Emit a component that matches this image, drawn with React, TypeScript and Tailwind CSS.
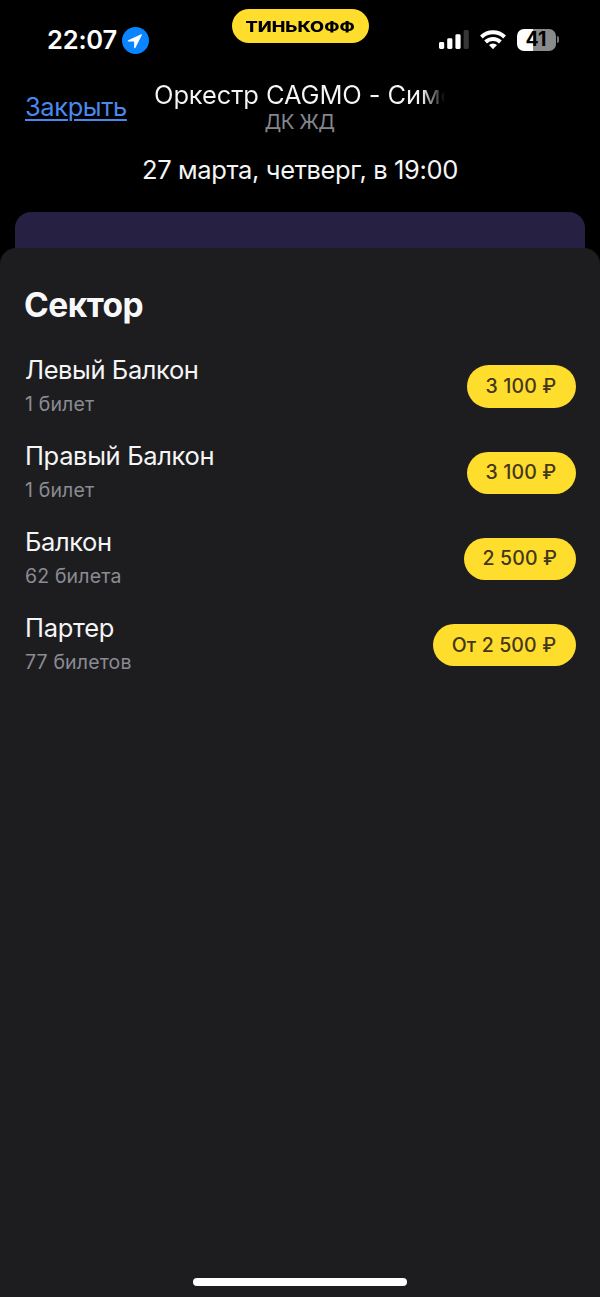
import React from "react";
import clsx from "clsx";

interface Sector {
  id: string;
  title: string;
  tickets: string;
  price: string;
  titleTracking: string;
  pillWidth: string;
}

const sectors: Sector[] = [
  { id: "left", title: "Левый Балкон", tickets: "1 билет", price: "3 100 ₽", titleTracking: "tracking-[-0.42px]", pillWidth: "w-[109px]" },
  { id: "right", title: "Правый Балкон", tickets: "1 билет", price: "3 100 ₽", titleTracking: "tracking-[-0.34px]", pillWidth: "w-[109px]" },
  { id: "balcony", title: "Балкон", tickets: "62 билета", price: "2 500 ₽", titleTracking: "tracking-[-0.42px]", pillWidth: "w-[111.5px]" },
  { id: "parterre", title: "Партер", tickets: "77 билетов", price: "От 2 500 ₽", titleTracking: "tracking-[-0.3px]", pillWidth: "w-[143px]" },
];

function SignalIcon() {
  return (
    <svg width="30" height="19" viewBox="0 0 30 19" fill="#fff">
      <rect x="0" y="12" width="5.2" height="7" rx="1.4" />
      <rect x="8.2" y="8.3" width="5.2" height="10.7" rx="1.4" />
      <rect x="16.4" y="4.3" width="5.2" height="14.7" rx="1.4" />
      <rect x="24.6" y="0" width="5.2" height="19" rx="1.4" fill="#363636" />
    </svg>
  );
}

function WifiIcon() {
  return (
    <svg width="26" height="19" viewBox="0 0 26 19" fill="none" stroke="#fff" strokeWidth="3.9">
      <path d="M1.4 7a16.6 16.6 0 0 1 23.2 0" />
      <path d="M5.6 12a10.6 10.6 0 0 1 14.8 0" />
      <path d="M13 19.2l-4-4.1a5.7 5.7 0 0 1 8 0z" fill="#fff" stroke="none" />
    </svg>
  );
}

function Battery() {
  return (
    <div className="flex items-center gap-[1.5px]">
      <div className="flex h-[21.5px] w-[39px] items-center justify-center rounded-[7px] bg-linear-to-r from-white from-[42%] to-[#8a8a8a] to-[42%] text-[19.5px] font-bold leading-none text-black">
        41
      </div>
      <div className="h-[7px] w-[2px] rounded-r-full bg-[#777]" />
    </div>
  );
}

function StatusBar() {
  return (
    <div className="flex h-20 items-start justify-between pl-[47px] pr-[41px]">
      <div className="flex w-[184px] items-center gap-[5px] pt-[26px]">
        <span className="text-[25.5px] font-semibold leading-7 tracking-[-0.2px] text-white">22:07</span>
        <svg width="27" height="27" viewBox="0 0 27 27">
          <circle cx="13.5" cy="13.5" r="13.5" fill="#0a84ff" />
          <path d="M19.2 7.2L6.2 13.2c-.8.4-.6 1.4.2 1.4h5.7v5.8c0 .9 1.1 1.1 1.5.2L19.9 7.9c.2-.5-.2-.9-.7-.7z" fill="#fff" />
        </svg>
      </div>
      <div className="mt-[9px] flex h-[34px] w-[137px] items-center justify-center rounded-full bg-[#ffdd2d]">
        <span className="mt-px scale-x-[1.3] text-[14px] font-extrabold leading-none text-black">ТИНЬКОФФ</span>
      </div>
      <div className="flex w-[190px] items-center justify-end pt-[29px]">
        <SignalIcon />
        <span className="w-[11px]" />
        <WifiIcon />
        <span className="w-[11px]" />
        <Battery />
      </div>
    </div>
  );
}

function SectorRow({ sector }: { sector: Sector }) {
  return (
    <li className="flex h-[86.2px] items-center justify-between">
      <div>
        <div className={clsx("text-[25.5px] leading-[34px] text-[#f5f5f6]", sector.titleTracking)}>{sector.title}</div>
        <div className="text-[19.5px] leading-[34px] tracking-[0.15px] text-[#8b8b93]">{sector.tickets}</div>
      </div>
      <button
        className={clsx(
          "flex h-[42.5px] items-center justify-center rounded-full bg-[#ffdd2d] text-[19.5px] font-medium tracking-[0.15px] text-[#43371b]",
          sector.pillWidth
        )}
      >
        {sector.price}
      </button>
    </li>
  );
}

export default function App() {
  return (
    <div className="flex h-[1297px] w-[600px] flex-col overflow-hidden bg-black font-['Inter',sans-serif]">
      <StatusBar />
      <header className="flex h-[68px] items-start">
        <a className="ml-[25px] mt-[10px] w-[129px] text-[25.5px] leading-[34px] tracking-[-0.42px] text-[#4a88ee] underline decoration-[1.5px] underline-offset-[3px]">
          Закрыть
        </a>
        <div className="w-[291px]">
          {/* long title fades out at the right edge */}
          <div className="whitespace-nowrap bg-linear-to-r from-[#f5f5f5] from-[92%] to-transparent bg-clip-text text-[25.5px] leading-[29px] tracking-[-0.12px] text-transparent">
            Оркестр CAGMO - Симф
          </div>
          <div className="text-center text-[20.5px] leading-[26px] tracking-[-0.6px] text-[#85858d]">ДК ЖД</div>
        </div>
      </header>
      <div className="h-16 text-center text-[25.5px] leading-[44px] tracking-[-0.37px] text-[#f5f5f5]">27 марта, четверг, в 19:00</div>
      <div className="mx-[15px] h-9 shrink-0 rounded-t-2xl bg-[#262143]" />
      <main className="flex flex-1 flex-col rounded-t-[16px] bg-[#1d1d1f] px-6">
        <h1 className="mt-[37px] text-[33.5px] font-bold leading-[40px] tracking-[-0.5px] text-[#f8f8fa]">Сектор</h1>
        <ul className="mt-[18.5px] pl-px pr-[0.5px]">
          {sectors.map((sector) => (
            <SectorRow key={sector.id} sector={sector} />
          ))}
        </ul>
        <div className="mx-auto mb-[11px] mt-auto h-2 w-[214px] rounded-full bg-white" />
      </main>
    </div>
  );
}
